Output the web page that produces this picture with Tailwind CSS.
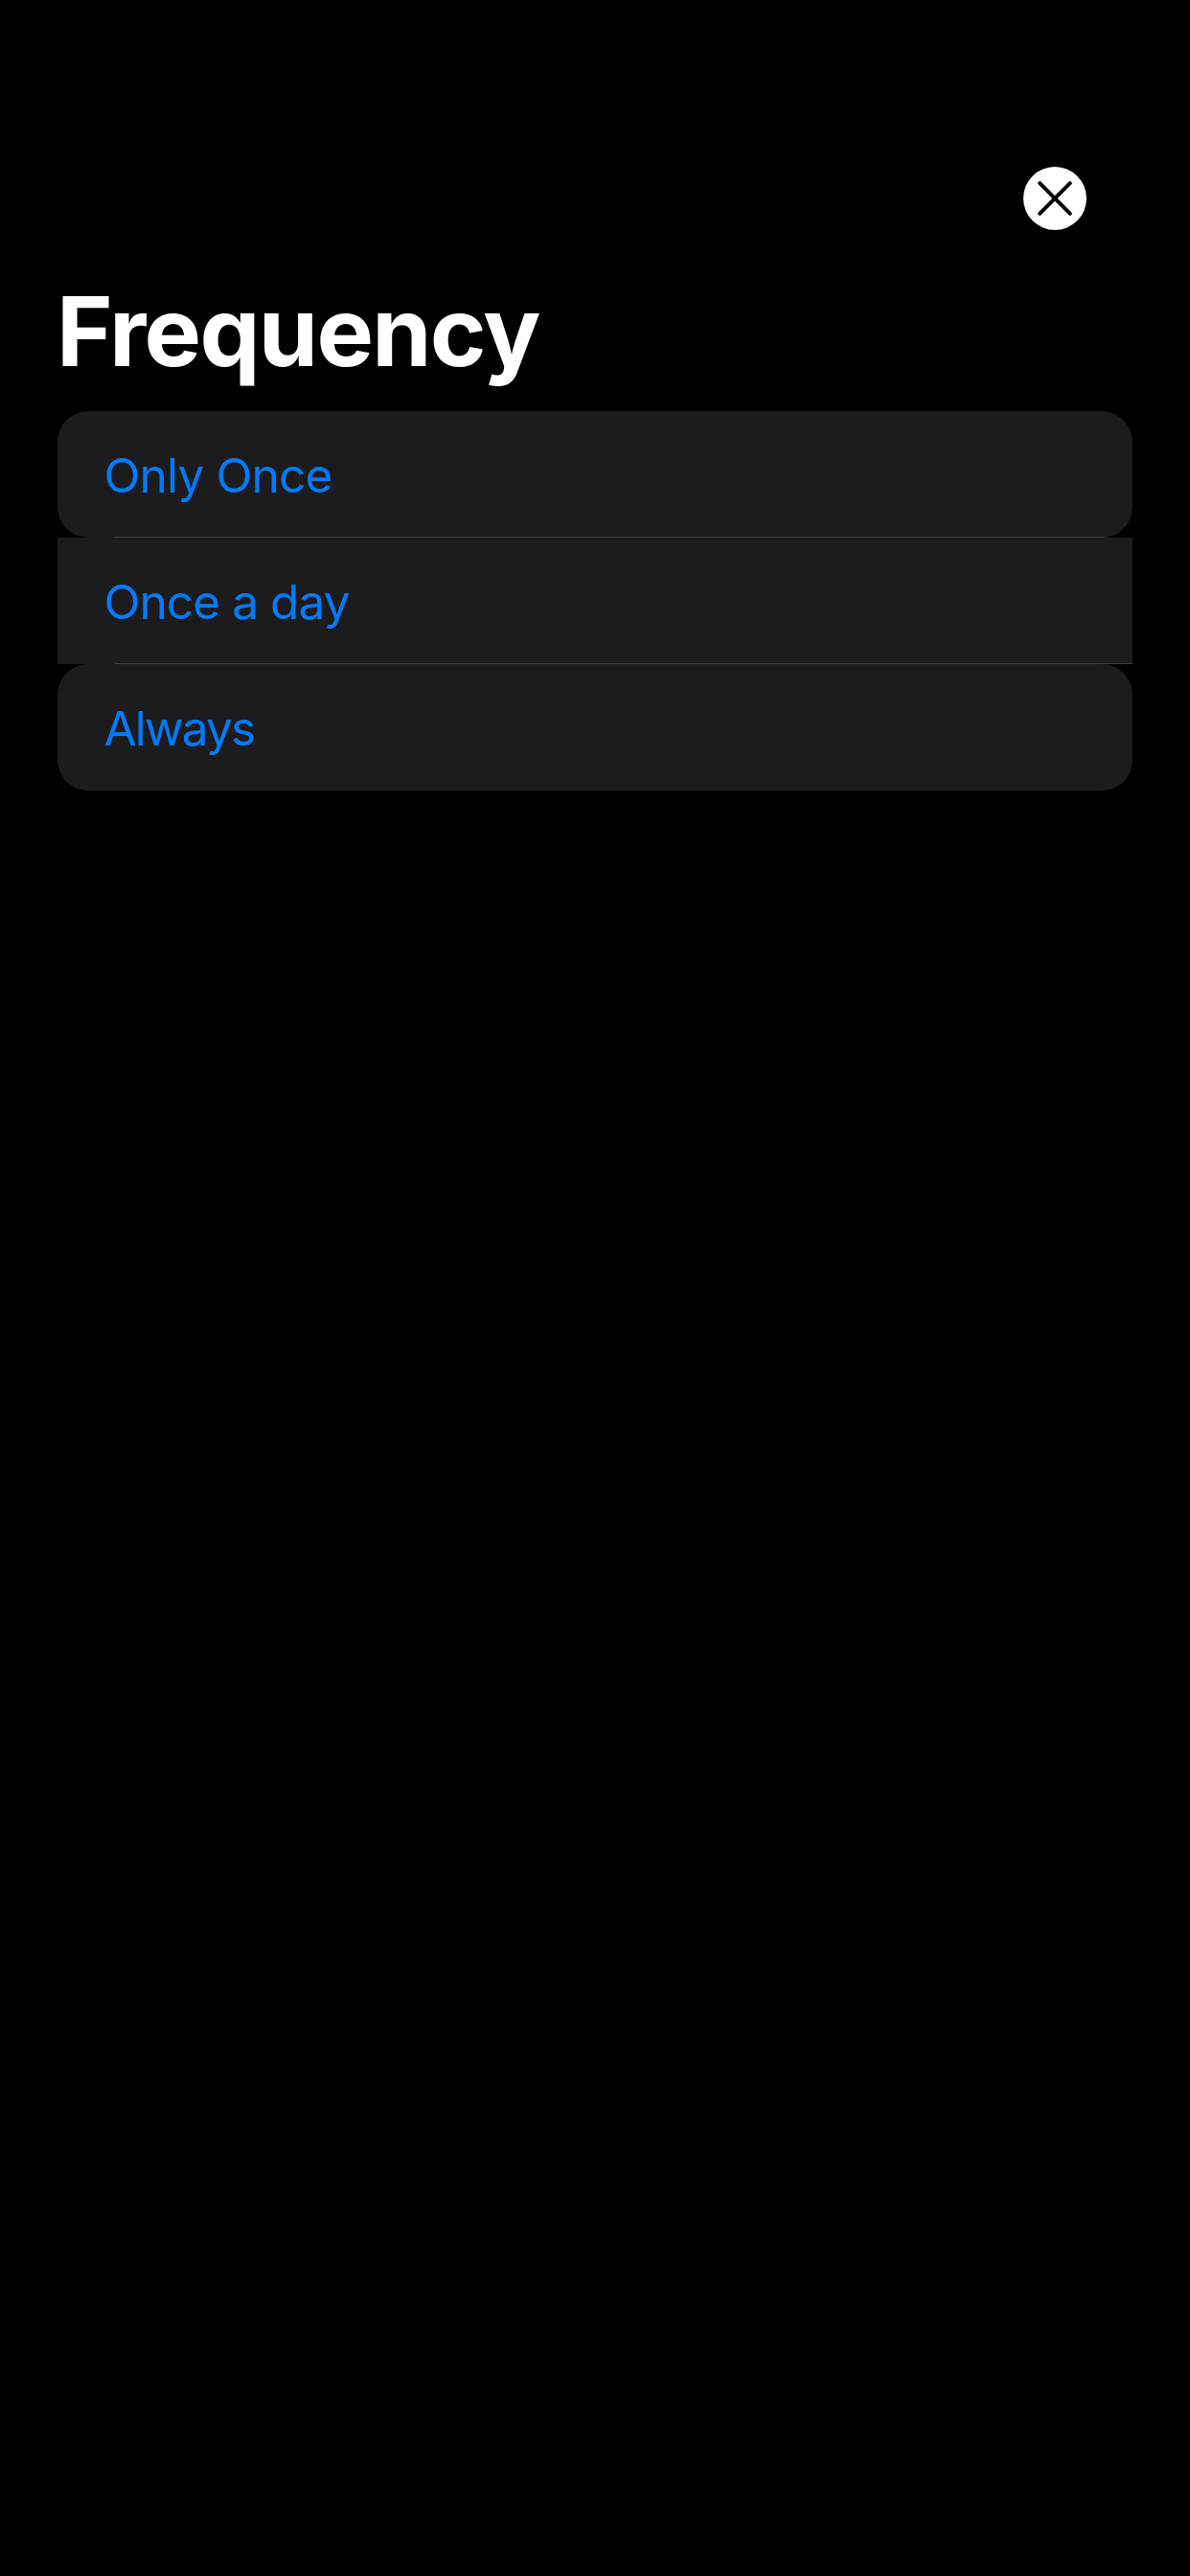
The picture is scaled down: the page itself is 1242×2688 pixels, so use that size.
<!DOCTYPE html>
<html lang="en">
<head>
<meta charset="utf-8">
<title>Frequency</title>
<script src="https://cdn.jsdelivr.net/npm/@tailwindcss/browser@4"></script>
</head>
<body class="bg-black">
<main class="flex min-h-[2688px] w-[1242px] flex-col bg-black px-[60px] pt-[174px] font-['Inter',sans-serif]">
  <header class="flex justify-end pr-12">
    <button aria-label="Close" class="size-[66px]">
      <svg viewBox="0 0 66 66" class="block size-full"><circle cx="33" cy="33" r="33" fill="#fff"/><path d="M17.2 17.2 48.8 48.8M48.8 17.2 17.2 48.8" stroke="#000" stroke-width="4" stroke-linecap="round"/></svg>
    </button>
  </header>
  <h1 class="-ml-px mt-[46px] h-[143px] text-[100px] leading-[119px] font-bold tracking-[-1.7px] whitespace-nowrap text-white">Frequency</h1>
  <ul class="flex flex-col text-[49.5px] leading-[60px] text-[#007aff]">
    <li class="flex h-[132px] flex-col overflow-hidden rounded-[32px] bg-[#1c1c1e]">
      <span class="flex-1 pt-[37px] pl-[48.5px] tracking-[-0.8px]">Only Once</span>
      <span class="ml-[60px] h-px bg-[#3d3d41]"></span>
    </li>
    <li class="flex h-[132px] flex-col bg-[#1c1c1e]">
      <span class="flex-1 pt-[37px] pl-[48.5px] tracking-[-0.9px]">Once a day</span>
      <span class="ml-[60px] h-px bg-[#3d3d41]"></span>
    </li>
    <li class="flex h-[132px] flex-col rounded-[32px] bg-[#1c1c1e]">
      <span class="flex-1 pt-[37px] pl-[48.5px] tracking-[-1.8px]">Always</span>
    </li>
  </ul>
</main>
</body>
</html>
